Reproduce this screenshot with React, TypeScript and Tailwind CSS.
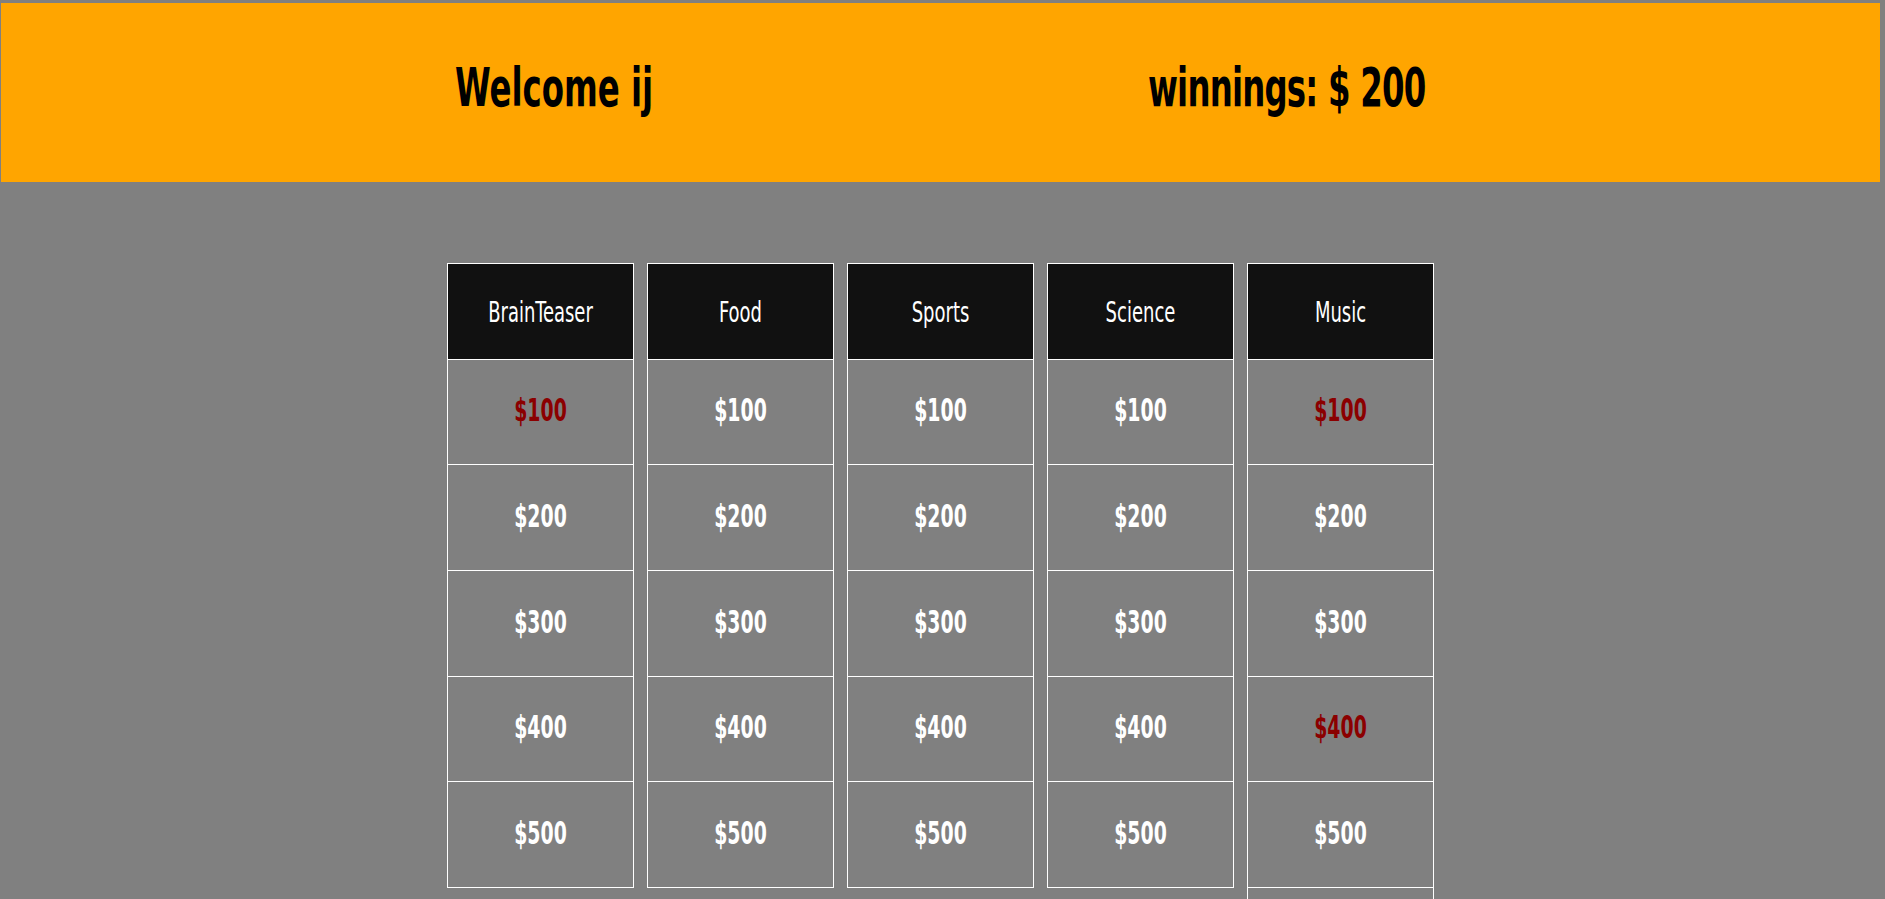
const categories = ['BrainTeaser', 'Food', 'Sports', 'Science', 'Music']
const values = [100, 200, 300, 400, 500]
const rowHeights = ['h-[105px]', 'h-[106px]', 'h-[106px]', 'h-[105px]', 'h-[106px]']

// cells already answered show in dark red
const answered: Record<string, number[]> = {
  BrainTeaser: [100],
  Music: [100, 400],
}

const font = { fontFamily: '"DejaVu Sans Condensed", "Liberation Sans Narrow", "DejaVu Sans", sans-serif' }

function Column({ name }: { name: string }) {
  const done = answered[name] ?? []
  const extra = name === 'Music'
  return (
    <div className="flex w-[187px] flex-col">
      <div className="flex h-[97px] items-center justify-center border border-white bg-[#111111] text-[20px] text-white">
        <span className="inline-block scale-y-[1.4]">{name}</span>
      </div>
      {values.map((v, i) => (
        <div
          key={v}
          className={`flex ${rowHeights[i]} items-center justify-center border border-t-0 border-white text-[21px] font-bold ${
            done.includes(v) ? 'text-[#8b0000]' : 'text-white'
          }`}
        >
          <span className="inline-block scale-y-[1.5]">${v}</span>
        </div>
      ))}
      {extra && <div className="h-[40px] border-x border-t-0 border-white" />}
    </div>
  )
}

export default function App() {
  return (
    <div className="h-[899px] overflow-hidden bg-[#808080]" style={font}>
      <div className="ml-[1px] mt-[3px] flex h-[179px] w-[1879px] items-center bg-[#ffa500] pb-[9px] text-black">
        <h1 className="ml-[454px] w-[693px] text-[36px] font-bold">
          <span className="inline-block scale-y-[1.5]">Welcome ij</span>
        </h1>
        <h1 className="text-[36px] font-bold tracking-[-0.8px]">
          <span className="inline-block scale-y-[1.5]">winnings: $ 200</span>
        </h1>
      </div>
      <div className="mt-[81px] flex w-[1881px] justify-center gap-[13px]">
        {categories.map((c) => (
          <Column key={c} name={c} />
        ))}
      </div>
    </div>
  )
}
